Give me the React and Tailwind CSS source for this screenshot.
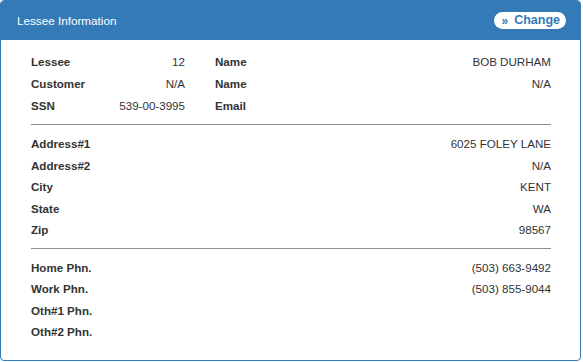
import React from 'react';

const Row = ({ label, value }) => (
    <div className="flex justify-between h-[21.5px] items-center">
        <span className="font-bold">{label}</span>
        <span>{value}</span>
    </div>
);

const App = () => {
    const top = [
        ['Lessee', '12', 'Name', 'BOB DURHAM'],
        ['Customer', 'N/A', 'Name', 'N/A'],
        ['SSN', '539-00-3995', 'Email', ''],
    ];
    const address = [
        ['Address#1', '6025 FOLEY LANE'],
        ['Address#2', 'N/A'],
        ['City', 'KENT'],
        ['State', 'WA'],
        ['Zip', '98567'],
    ];
    const phones = [
        ['Home Phn.', '(503) 663-9492'],
        ['Work Phn.', '(503) 855-9044'],
        ['Oth#1 Phn.', ''],
        ['Oth#2 Phn.', ''],
    ];

    return (
        <div className="w-[583px] h-[362px] bg-white" style={{ fontFamily: '"Liberation Sans", Arial, sans-serif' }}>
            <div className="w-[581px] h-[361px] border border-[#337ab7] rounded-[4px] overflow-hidden flex flex-col">
                <div className="h-[39px] bg-[#337ab7] flex items-center justify-between pl-[16px] pr-[14px] shrink-0">
                    <span className="text-white text-[11.7px]">Lessee Information</span>
                    <button className="bg-white rounded-full h-[17px] pl-[7px] pr-[6px] flex items-center gap-[6px] text-[#337ab7] font-bold text-[12.5px] leading-none">
                        <span className="text-[12px]">»</span>
                        <span>Change</span>
                    </button>
                </div>
                <div className="pl-[30px] pr-[29px] pt-[11px] text-[11.6px] text-[#333]">
                    <div className="flex flex-col">
                        {top.map(([l1, v1, l2, v2]) => (
                            <div key={l1} className="flex h-[22px] items-center">
                                <div className="w-[154px] flex justify-between">
                                    <span className="font-bold">{l1}</span>
                                    <span>{v1}</span>
                                </div>
                                <div className="flex-1 ml-[30px] flex justify-between">
                                    <span className="font-bold">{l2}</span>
                                    <span>{v2}</span>
                                </div>
                            </div>
                        ))}
                    </div>
                    <div className="h-px bg-[#8c8c8c] mt-[7px] mb-[8px]" />
                    <div className="flex flex-col">
                        {address.map(([l, v]) => <Row key={l} label={l} value={v} />)}
                    </div>
                    <div className="h-px bg-[#8c8c8c] mt-[7px] mb-[8px]" />
                    <div className="flex flex-col">
                        {phones.map(([l, v]) => <Row key={l} label={l} value={v} />)}
                    </div>
                </div>
            </div>
        </div>
    );
};

export default App;
